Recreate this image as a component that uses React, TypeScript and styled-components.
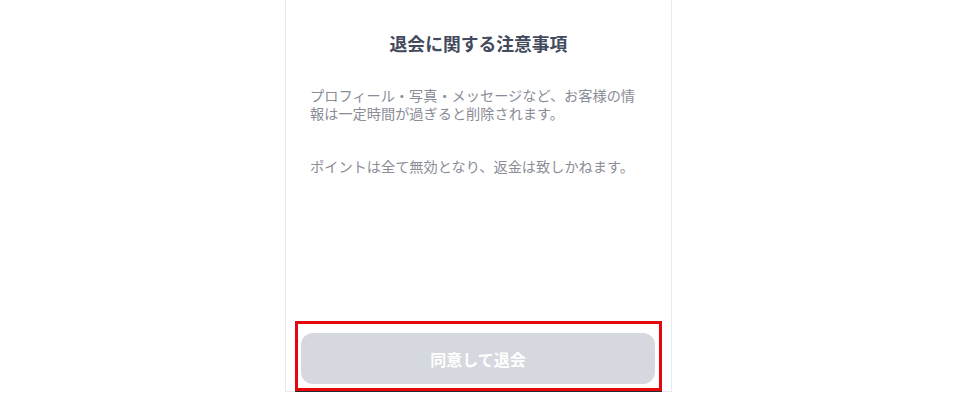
import styled, { createGlobalStyle } from "styled-components";

const GlobalStyle = createGlobalStyle`
  body {
    margin: 0;
    background: #ffffff;
    font-family: "Noto Sans CJK JP", "Noto Sans", sans-serif;
  }
`;

const Page = styled.div`
  width: 960px;
  height: 400px;
  overflow: hidden;
  display: flex;
  padding-left: 285px;
  box-sizing: border-box;
`;

const Card = styled.section`
  width: 387px;
  height: 392px;
  box-sizing: border-box;
  border: 1px solid #e8e9ec;
  border-top: none;
  display: flex;
  flex-direction: column;
`;

const Body = styled.div`
  flex: 1;
  padding: 32px 24px 0;
  display: flex;
  flex-direction: column;
`;

const Title = styled.h1`
  margin: 0 0 33px;
  font-size: 17.8px;
  line-height: 22px;
  font-weight: 700;
  color: #434a5d;
  text-align: center;
`;

const Note = styled.p`
  margin: 0 0 36px;
  font-size: 14.2px;
  line-height: 17.5px;
  color: #8a8d97;
`;

const Footer = styled.div`
  margin: 0 9px 0;
  height: 70px;
  box-sizing: border-box;
  border: 3px solid #e3080f;
  padding: 9px 4px 4px 3px;
  box-shadow: 0 1px 0 #2a2a2a;
`;

const Button = styled.button<{ $disabled?: boolean }>`
  width: 100%;
  height: 100%;
  border: none;
  border-radius: 12px;
  background: ${(p) => (p.$disabled ? "#d5d8df" : "#434a5d")};
  color: #ffffff;
  font-family: inherit;
  font-size: 16px;
  font-weight: 700;
  cursor: pointer;
`;

export default function App() {
  return (
    <Page>
      <GlobalStyle />
      <Card>
        <Body>
          <Title>退会に関する注意事項</Title>
          <Note>
            プロフィール・写真・メッセージなど、お客様の情報は一定時間が過ぎると削除されます。
          </Note>
          <Note>ポイントは全て無効となり、返金は致しかねます。</Note>
        </Body>
        <Footer>
          <Button $disabled>同意して退会</Button>
        </Footer>
      </Card>
    </Page>
  );
}
